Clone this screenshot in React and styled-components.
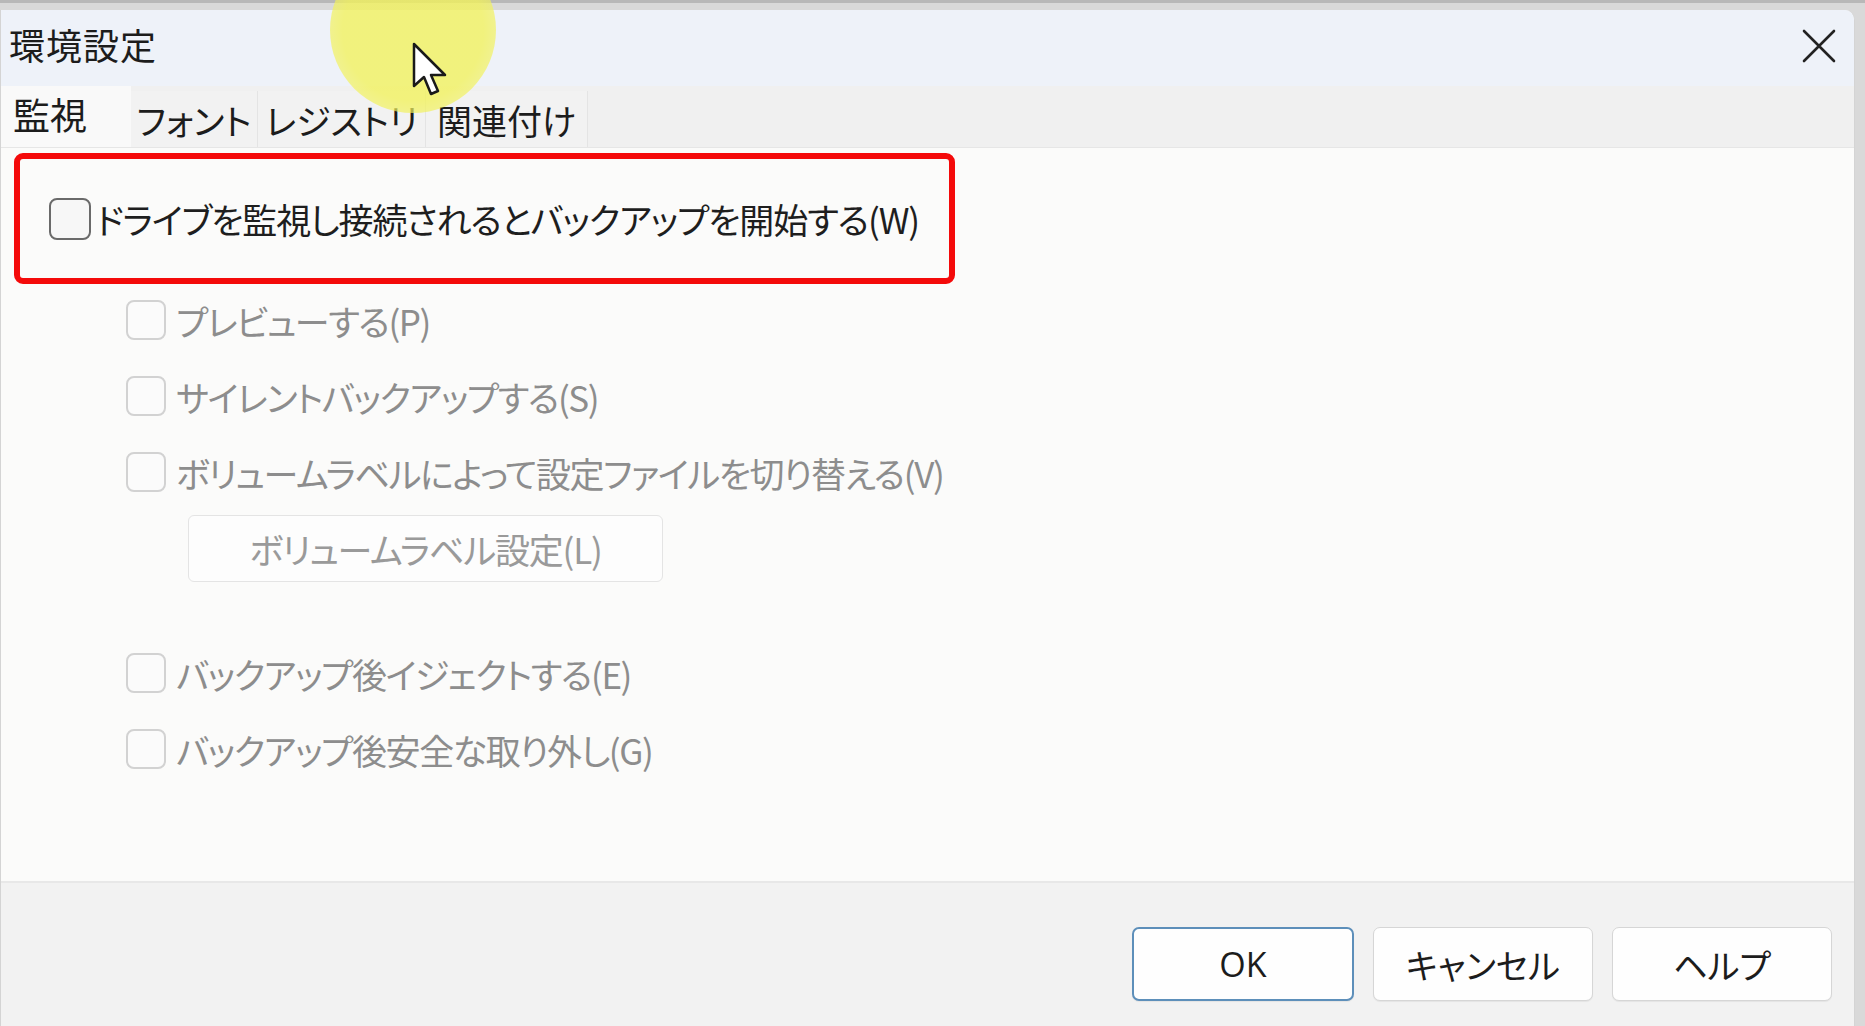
import React from 'react';
import styled, { createGlobalStyle } from 'styled-components';

const ui = '"Noto Sans CJK JP", "Noto Sans", sans-serif';

const GlobalStyle = createGlobalStyle`
  html, body {
    margin: 0;
    padding: 0;
    background: #d9d9d9;
    overflow: hidden;
  }
  body {
    font-family: ${ui};
    font-feature-settings: "palt";
  }
`;

const Stage = styled.div`
  position: relative;
  width: 1865px;
  height: 1026px;
  padding-top: 7px;
  box-sizing: border-box;
  border-top: 3px solid #b8b8b8;
`;

const Window = styled.div`
  display: flex;
  flex-direction: column;
  height: 1040px;
  margin-right: 10px;
  background: #fbfbfb;
  border-left: 1px solid #d4d4d4;
  border-right: 1px solid #d4d4d4;
  border-top-right-radius: 10px;
  overflow: hidden;
`;

const TitleBar = styled.div`
  display: flex;
  align-items: center;
  justify-content: space-between;
  height: 76px;
  padding: 0 17px 8px 8px;
  box-sizing: border-box;
  background: #eef2f9;
`;

const Title = styled.span`
  font-size: 36px;
  letter-spacing: 1px;
  color: #1c1c1c;
`;

const CloseButton = styled.button`
  display: flex;
  align-items: center;
  justify-content: center;
  width: 36px;
  height: 36px;
  padding: 0;
  border: 0;
  background: transparent;
  margin-top: 4px;
`;

const TabStrip = styled.div`
  display: flex;
  align-items: flex-end;
  height: 61px;
  background: #f0f0f0;
  border-bottom: 1px solid #e6e6e6;
`;

const Tab = styled.div`
  display: flex;
  align-items: center;
  justify-content: ${p => (p.$active ? 'flex-start' : 'center')};
  width: ${p => p.$width}px;
  height: ${p => (p.$active ? 61 : 56)}px;
  box-sizing: border-box;
  padding: ${p => (p.$active ? '0 0 6px 12px' : '0')};
  font-size: ${p => (p.$active ? 37 : 35)}px;
  color: #1c1c1c;
  background: ${p => (p.$active ? '#f9f9f9' : '#f2f2f2')};
  border-right: 1px solid ${p => (p.$active ? '#f9f9f9' : '#e4e4e4')};
  white-space: nowrap;
`;

const Content = styled.div`
  height: 733px;
  padding: 5px 0 0 13px;
  box-sizing: border-box;
  background: #fbfbfa;
`;

const Highlight = styled.div`
  display: flex;
  align-items: center;
  width: 941px;
  height: 131px;
  box-sizing: border-box;
  padding-left: 29px;
  border: 6px solid #f40a0a;
  border-radius: 9px;
`;

const Row = styled.label`
  display: flex;
  align-items: center;
  gap: ${p => (p.$disabled ? 10 : 5)}px;
  height: 76px;
  font-size: 35px;
  letter-spacing: ${p => (p.$disabled ? -1.4 : -1.1)}px;
  white-space: nowrap;
  color: ${p => (p.$disabled ? '#8d8d8d' : '#1e1e1e')};
`;

const Box = styled.span`
  flex: none;
  width: ${p => (p.$disabled ? 40 : 42)}px;
  height: ${p => (p.$disabled ? 40 : 42)}px;
  box-sizing: border-box;
  border: ${p => (p.$disabled ? '2px solid #d2d2d2' : '2.5px solid #6a6a6a')};
  border-radius: 8px;
  background: ${p => (p.$disabled ? '#fbfbfb' : '#f7f7f7')};
`;

const SubOptions = styled.div`
  display: flex;
  flex-direction: column;
  margin-top: -2px;
  padding-left: 112px;
`;

const Gap = styled.div`
  height: ${p => p.$h}px;
`;

const LabelButton = styled.div`
  display: flex;
  align-items: center;
  justify-content: center;
  width: 475px;
  height: 67px;
  margin: 5px 0 0 62px;
  box-sizing: border-box;
  border: 1.5px solid #e4e4e4;
  border-radius: 6px;
  background: #fdfdfd;
  font-size: 35px;
  letter-spacing: -1.2px;
  color: #9a9a9a;
`;

const Footer = styled.div`
  display: flex;
  justify-content: flex-end;
  gap: 19px;
  padding: 44px 22px 0 0;
  height: 146px;
  box-sizing: border-box;
  background: #f2f2f2;
  border-top: 2px solid #e8e8e8;
`;

const DialogButton = styled.button`
  width: ${p => p.$width}px;
  height: 74px;
  box-sizing: border-box;
  border: ${p => (p.$primary ? '2px solid #5d8fba' : '1.5px solid #d6d6d6')};
  border-radius: 7px;
  background: #fefefe;
  font-family: ${p => (p.$latin ? '"Open Sans", "Noto Sans", sans-serif' : ui)};
  font-feature-settings: "palt";
  font-size: 34px;
  color: #1c1c1c;
  box-shadow: 0 1px 1px rgba(0, 0, 0, 0.06);
`;

const Spotlight = styled.div`
  position: absolute;
  left: 330px;
  top: -56px;
  width: 166px;
  height: 166px;
  border-radius: 50%;
  background: radial-gradient(circle, rgba(242, 242, 90, 0.78) 0 60%, rgba(242, 242, 90, 0.55) 82%, rgba(242, 242, 90, 0) 100%);
  pointer-events: none;
`;

const Cursor = styled.svg`
  position: absolute;
  left: 412px;
  top: 39px;
  pointer-events: none;
`;

const tabs = [
  { label: '監視', width: 130, active: true },
  { label: 'フォント', width: 127 },
  { label: 'レジストリ', width: 168 },
  { label: '関連付け', width: 162 },
];

const Check = ({ disabled, children }) => (
  <Row $disabled={disabled}>
    <Box $disabled={disabled} />
    <span>{children}</span>
  </Row>
);

const App = () => (
  <Stage>
    <GlobalStyle />
    <Window>
      <TitleBar>
        <Title>環境設定</Title>
        <CloseButton aria-label="close">
          <svg width="34" height="34" viewBox="0 0 34 34">
            <path d="M2 2 L32 32 M32 2 L2 32" stroke="#222" strokeWidth="2.6" strokeLinecap="round" />
          </svg>
        </CloseButton>
      </TitleBar>
      <TabStrip>
        {tabs.map(t => (
          <Tab key={t.label} $width={t.width} $active={t.active}>
            {t.label}
          </Tab>
        ))}
      </TabStrip>
      <Content>
        <Highlight>
          <Check>ドライブを監視し接続されるとバックアップを開始する(W)</Check>
        </Highlight>
        <SubOptions>
          <Check disabled>プレビューする(P)</Check>
          <Check disabled>サイレントバックアップする(S)</Check>
          <Check disabled>ボリュームラベルによって設定ファイルを切り替える(V)</Check>
          <LabelButton>ボリュームラベル設定(L)</LabelButton>
          <Gap $h={53} />
          <Check disabled>バックアップ後イジェクトする(E)</Check>
          <Check disabled>バックアップ後安全な取り外し(G)</Check>
        </SubOptions>
      </Content>
      <Footer>
        <DialogButton $width={222} $primary $latin>OK</DialogButton>
        <DialogButton $width={220}>キャンセル</DialogButton>
        <DialogButton $width={220}>ヘルプ</DialogButton>
      </Footer>
    </Window>
    <Spotlight />
    <Cursor width="42" height="60" viewBox="0 0 42 60">
      <path d="M2 2 L2 44 L12 35 L19 52 L26 49 L19 33 L33 33 Z" fill="#fff" stroke="#1a1a1a" strokeWidth="2.5" strokeLinejoin="round" />
    </Cursor>
  </Stage>
);

export default App;
